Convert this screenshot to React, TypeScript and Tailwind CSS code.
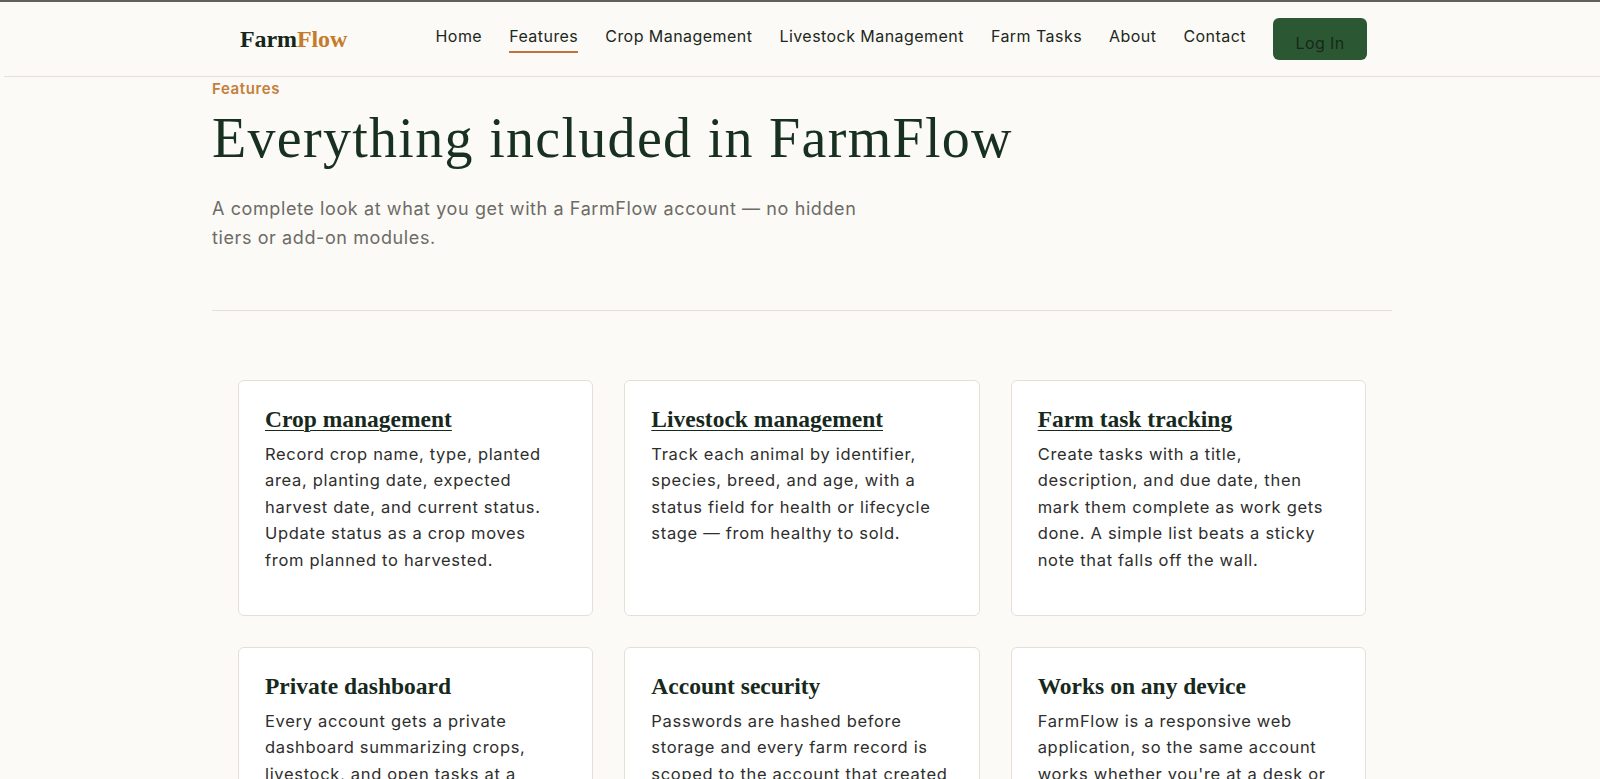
import React from 'react';

const navLinks = ['Home', 'Features', 'Crop Management', 'Livestock Management', 'Farm Tasks', 'About', 'Contact'];

interface Feature {
  title: string;
  body: string;
  link?: boolean;
}

const features: Feature[] = [
  {
    title: 'Crop management',
    body: 'Record crop name, type, planted area, planting date, expected harvest date, and current status. Update status as a crop moves from planned to harvested.',
    link: true,
  },
  {
    title: 'Livestock management',
    body: 'Track each animal by identifier, species, breed, and age, with a status field for health or lifecycle stage — from healthy to sold.',
    link: true,
  },
  {
    title: 'Farm task tracking',
    body: 'Create tasks with a title, description, and due date, then mark them complete as work gets done. A simple list beats a sticky note that falls off the wall.',
    link: true,
  },
  {
    title: 'Private dashboard',
    body: 'Every account gets a private dashboard summarizing crops, livestock, and open tasks at a glance, so you always know where things stand.',
  },
  {
    title: 'Account security',
    body: 'Passwords are hashed before storage and every farm record is scoped to the account that created it, so nobody else can see your data.',
  },
  {
    title: 'Works on any device',
    body: "FarmFlow is a responsive web application, so the same account works whether you're at a desk or out in the field on a phone.",
  },
];

const serif = 'font-["Liberation_Serif","DejaVu_Serif",serif]';

const FeatureCard: React.FC<{ feature: Feature }> = ({ feature }) => (
  <div className="min-h-[236px] rounded-md border border-[#e5e0d6] bg-white px-[26px] pt-[26px] pb-6">
    <h3
      className={`${serif} text-[23.5px] font-bold leading-6 text-[#17291c] ${
        feature.link ? 'underline decoration-1 underline-offset-[3px]' : ''
      }`}
    >
      {feature.title}
    </h3>
    <p className="mt-[10px] text-[16.5px] leading-[26.4px] tracking-[0.68px] text-[#2e2e2c]">{feature.body}</p>
  </div>
);

export default function App() {
  return (
    <div className='min-h-screen border-t-2 border-[#5f5f5c] bg-[#fbfaf6] pl-1 font-["Inter","Open_Sans",sans-serif] text-[#1c2a22]'>
      <header className="border-b border-[#e4e0d8]">
        <div className="mx-auto flex h-[74px] w-[1130px] items-start justify-between pl-[3px]">
          <a className={`${serif} mt-[21px] text-[24px] font-bold leading-8 tracking-[-0.1px]`}>
            <span className="text-[#15261a]">Farm</span>
            <span className="text-[#c57a2c]">Flow</span>
          </a>
          <nav className="flex items-start">
            <ul className="mt-[22px] flex items-start gap-[27px] text-[16px] leading-6 tracking-[0.45px] text-[#1d2721]">
              {navLinks.map((link) => (
                <li key={link}>
                  <a
                    className={`block border-b-2 pb-[3px] ${
                      link === 'Features' ? 'border-[#c2703c]' : 'border-transparent'
                    }`}
                  >
                    {link}
                  </a>
                </li>
              ))}
            </ul>
            <button className="mt-[16px] ml-[27px] h-[42px] w-[94px] rounded-md bg-[#2c5733] pt-[8px] text-[16px] tracking-[0.4px] text-[#15291a]">
              Log In
            </button>
          </nav>
        </div>
      </header>

      <main className="mx-auto w-[1180px]">
        <section className="pt-[2px]">
          <p className="text-[15px] font-semibold leading-5 tracking-[0.6px] text-[#c47f3a]">Features</p>
          <h1 className={`${serif} mt-[8px] text-[56px] font-normal leading-[62px] tracking-[1.3px] text-[#17301f]`}>
            Everything included in FarmFlow
          </h1>
          <p className="mt-[25px] w-[660px] text-[18px] leading-[29px] tracking-[0.6px] text-[#6d6b66]">
            A complete look at what you get with a FarmFlow account — no hidden tiers or add-on modules.
          </p>
          <hr className="mt-[58px] border-t border-[#e4e0d8]" />
        </section>

        <section className="grid grid-cols-3 gap-x-[31px] gap-y-[31px] px-[26px] pt-[69px] pb-16">
          {features.map((feature) => (
            <FeatureCard key={feature.title} feature={feature} />
          ))}
        </section>
      </main>
    </div>
  );
}
